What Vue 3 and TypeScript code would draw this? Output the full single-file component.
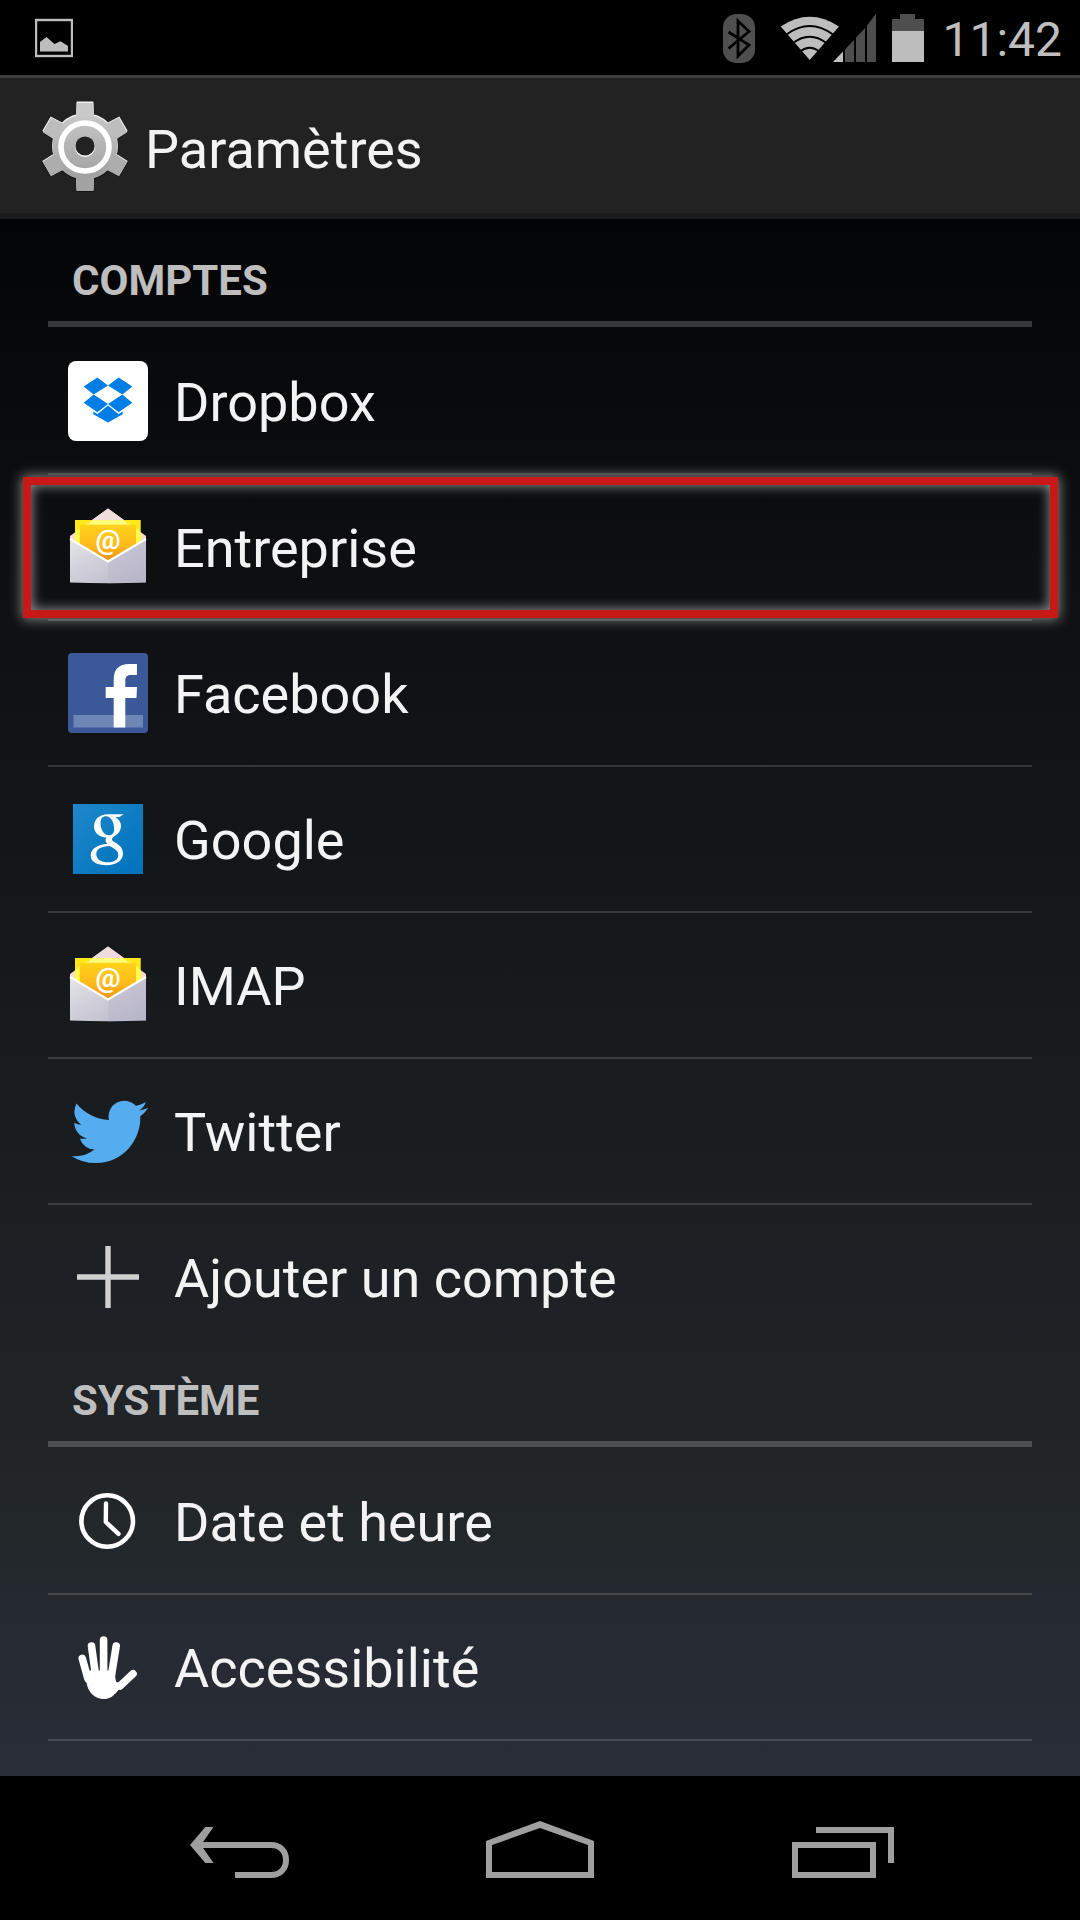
<script setup lang="ts">
type IconName = 'dropbox' | 'mail' | 'facebook' | 'google' | 'twitter' | 'plus' | 'clock' | 'hand'

interface Item {
  label: string
  icon: IconName
  highlighted?: boolean
}

interface Section {
  title: string
  items: Item[]
}

const sections: Section[] = [
  {
    title: 'COMPTES',
    items: [
      { label: 'Dropbox', icon: 'dropbox' },
      { label: 'Entreprise', icon: 'mail', highlighted: true },
      { label: 'Facebook', icon: 'facebook' },
      { label: 'Google', icon: 'google' },
      { label: 'IMAP', icon: 'mail' },
      { label: 'Twitter', icon: 'twitter' },
      { label: 'Ajouter un compte', icon: 'plus' },
    ],
  },
  {
    title: 'SYSTÈME',
    items: [
      { label: 'Date et heure', icon: 'clock' },
      { label: 'Accessibilité', icon: 'hand' },
    ],
  },
]

const teeth = [0, 60, 120, 180, 240, 300]
</script>

<template>
  <div class="screen">
    <!-- Gradients shared by the icons -->
    <svg class="defs" width="0" height="0" aria-hidden="true">
      <defs>
        <linearGradient id="metal" gradientUnits="userSpaceOnUse" x1="0" y1="-45" x2="0" y2="45">
          <stop offset="0" stop-color="#d0d0d0" />
          <stop offset="1" stop-color="#989898" />
        </linearGradient>
        <linearGradient id="paper" x1="0" y1="0" x2="0" y2="1">
          <stop offset="0" stop-color="#ffd21a" />
          <stop offset="0.6" stop-color="#ffb81a" />
          <stop offset="1" stop-color="#f08a10" />
        </linearGradient>
        <linearGradient id="flap" x1="0" y1="0" x2="0" y2="1">
          <stop offset="0" stop-color="#dcdce4" />
          <stop offset="0.3" stop-color="#fbdccf" />
          <stop offset="1" stop-color="#f3cfc4" />
        </linearGradient>
        <linearGradient id="front" x1="0" y1="0" x2="1" y2="1">
          <stop offset="0" stop-color="#e4e4e8" />
          <stop offset="1" stop-color="#b6b4c6" />
        </linearGradient>
        <linearGradient id="blue" x1="0" y1="0" x2="1" y2="1">
          <stop offset="0" stop-color="#1f88c9" />
          <stop offset="0.5" stop-color="#0f7cc2" />
          <stop offset="1" stop-color="#0072bc" />
        </linearGradient>
      </defs>
    </svg>

    <div class="status">
      <svg class="picture" width="38" height="40" viewBox="35 18 38 40" aria-hidden="true">
        <rect x="36" y="20" width="36" height="36" fill="none" stroke="#bdbdbd" stroke-width="2.4" />
        <path d="M40 42L46.5 37L54.5 44L60.5 41.3L68 46V51.5H40Z" fill="#bdbdbd" />
      </svg>
      <div class="indicators">
        <svg width="204" height="50" viewBox="721 11 204 50" aria-hidden="true">
          <rect x="723" y="12" width="32" height="49" rx="14" ry="13" fill="#4f4f4f" />
          <path d="M728.5 30L749 43L738 54V19L749 29.5L728.5 46.5" fill="none" stroke="#000" stroke-width="2.8" />
          <path d="M809.7 58L780.7 24.5Q809.7 5 839 24.5Z" fill="#bdbdbd" />
          <g fill="none" stroke="#000" stroke-width="2">
            <path d="M786.5 32.5Q809.7 15.5 833 32.5" />
            <path d="M793 41Q809.7 28.5 826.5 41" />
            <path d="M800 49.5Q809.7 42 819.5 49.5" />
          </g>
          <path d="M833 60L843 49.5V60Z" fill="#bdbdbd" />
          <path d="M845 47.5L854 38V60H845ZM856 35.5L865 26V60H856ZM867 23.5L876 12V60H867Z" fill="#4e4e4e" />
          <path d="M892 29V17H900V12H915V17H924V29Z" fill="#4e4e4e" />
          <rect x="892" y="29" width="32" height="31" fill="#bdbdbd" />
        </svg>
        <time class="time" datetime="11:42">11:42</time>
      </div>
    </div>

    <header class="bar">
      <svg width="96" height="96" viewBox="-48 -48 96 96" aria-hidden="true">
        <g fill="#111" transform="translate(0 1)">
          <circle r="33.6" />
          <path v-for="a in teeth" :key="a" :transform="`rotate(${a})`" d="M-9.5 -30L-8.8 -44.8H8.8L9.5 -30Z" />
        </g>
        <g fill="#f2f2f2">
          <circle r="33" />
          <path v-for="a in teeth" :key="a" :transform="`rotate(${a})`" d="M-9 -30L-8.4 -44.5H8.4L9 -30Z" />
        </g>
        <g transform="translate(0 1)" fill="url(#metal)">
          <circle r="32.6" />
        </g>
        <g fill="#b6b6b6">
          <path
            v-for="a in teeth"
            :key="a"
            :transform="`translate(0 1) rotate(${a})`"
            :fill="a === 0 ? '#c9c9c9' : a === 180 ? '#a3a3a3' : a === 60 || a === 300 ? '#bdbdbd' : '#adadad'"
            d="M-9 -30L-8.4 -44H8.4L9 -30Z"
          />
        </g>
        <circle r="24" cy="1" fill="none" stroke="#fff" stroke-width="5.6" />
        <circle r="10" cy="1" fill="#fff" />
        <circle r="9.6" fill="#222" />
      </svg>
      <h1 class="title">Paramètres</h1>
    </header>

    <main class="content">
      <section v-for="section in sections" :key="section.title" class="section">
        <h2 class="heading">{{ section.title }}</h2>
        <ul class="list">
          <li v-for="item in section.items" :key="item.label" class="item">
            <button type="button" class="row">
              <svg class="icon" width="80" height="80" viewBox="0 0 80 80" aria-hidden="true">
                <template v-if="item.icon === 'dropbox'">
                  <rect width="80" height="80" rx="8" fill="#fff" />
                  <path
                    fill="#007ee5"
                    d="M29.3 16.5L40 24.4L25.7 33.5L15.7 25.5ZM50.7 16.5L64.3 25.5L54.3 33.5L40 24.4ZM25.7 33.5L40 42.9L29.3 51.2L15.7 41.8ZM54.3 33.5L64.3 41.8L50.7 51.2L40 42.9ZM40 44.5L50.5 53.1L54.7 50.5V53.3L40 61.5L25.3 53.3V50.5L29.5 53.1Z"
                  />
                </template>
                <template v-else-if="item.icon === 'mail'">
                  <path d="M40 1.5L78 29V60H2V29Z" fill="url(#flap)" />
                  <path d="M7 13H72.7V53H7Z" fill="#ffe81a" />
                  <path d="M40 1.5L56 13H24Z" fill="#f0dcdc" />
                  <path d="M25 13H55L62 18H18Z" fill="#ffff7a" />
                  <path d="M7 25L12 21V45H7ZM72.7 25L68 21V45H72.7Z" fill="#ffff4a" />
                  <path d="M11.7 17.7H68V38L40 55L11.7 38Z" fill="url(#paper)" />
                  <text class="at" x="40" y="42" text-anchor="middle">@</text>
                  <path d="M2 32L40 55L78 32V75.5Q40 77 2 75.5Z" fill="url(#front)" />
                  <path d="M40 55L78 32V75.5L40 76.5Z" fill="#b4b2c8" opacity="0.35" />
                  <path d="M2 32L40 54.5L78 32" fill="none" stroke="#fff" stroke-width="2.2" />
                </template>
                <template v-else-if="item.icon === 'facebook'">
                  <rect width="80" height="80" rx="4" fill="#3b5998" />
                  <rect x="5.5" y="62" width="69.5" height="12.5" fill="#6e86b5" />
                  <path
                    fill="#fff"
                    d="M45.7 74.5V45H37.7V34H45.7V27C45.7 16 51 11 61 11H69V22H63.5C59 22 57.3 23.5 57.3 28V34H69L68.5 45H57.3V74.5Z"
                  />
                </template>
                <template v-else-if="item.icon === 'google'">
                  <rect x="5" y="5" width="70" height="70" fill="url(#blue)" />
                  <path
                    fill="#fff"
                    fill-rule="evenodd"
                    d="M40 15.3H55.5L51.5 18H47.5C51 20.5 53 23 53 27C53 31.5 50.5 34.5 47 36.8C44.5 38.3 44 39.3 44 40.4C44 41.6 45.5 42.5 48 44C52.5 46.8 55 50 55 54.6C55 61.5 48.5 66.2 38.5 66.2C29 66.2 22.7 62.5 22.7 56.7C22.7 49.5 29.5 45.8 39.5 44.8C38 43.5 37.5 42.5 37.5 41C37.5 40 38 39.2 38.5 38.4C31 38.4 26 33.5 26 27.5C26 20 32 15.3 40 15.3ZM38 17.3C34.5 17.3 32.5 20 32.5 24C32.5 30 35.7 36.3 41 36.3C44.7 36.3 46.2 33.5 46.2 30C46.2 24 43.3 17.3 38 17.3ZM41.5 47C33 47.4 28.3 50 28.3 55C28.3 60.3 33 63.3 40 63.3C46.5 63.3 50.3 60.5 50.3 56C50.3 51.8 47 50 41.5 47Z"
                  />
                </template>
                <path
                  v-else-if="item.icon === 'twitter'"
                  transform="translate(3.3 2.5) scale(3.2)"
                  fill="#55acee"
                  d="M23.953 4.57a10 10 0 01-2.825.775 4.958 4.958 0 002.163-2.723c-.951.555-2.005.959-3.127 1.184a4.92 4.92 0 00-8.384 4.482C7.69 8.095 4.067 6.13 1.64 3.162a4.822 4.822 0 00-.666 2.475c0 1.71.87 3.213 2.188 4.096a4.904 4.904 0 01-2.228-.616v.06a4.923 4.923 0 003.946 4.827 4.996 4.996 0 01-2.212.085 4.936 4.936 0 004.604 3.417 9.867 9.867 0 01-6.102 2.105c-.39 0-.779-.023-1.17-.067a13.995 13.995 0 007.557 2.209c9.053 0 13.998-7.496 13.998-13.985 0-.21 0-.42-.015-.63A9.935 9.935 0 0024 4.59z"
                />
                <path v-else-if="item.icon === 'plus'" d="M9 40H71M40 9V71" stroke="#d0d0d0" stroke-width="5.4" />
                <g v-else-if="item.icon === 'clock'" fill="none" stroke="#fff">
                  <circle cx="39.2" cy="40" r="25.8" stroke-width="4.6" />
                  <path d="M38 22.5L37.8 41L50.5 52.8" stroke-width="4.4" stroke-linecap="round" stroke-linejoin="round" />
                </g>
                <g v-else fill="#fff" stroke="#fff" stroke-linecap="round" stroke-linejoin="round">
                  <path
                    d="M14.3 31.5L20 52M23.5 19L27.5 48M35.6 13V48M48.2 19L43.5 48M65 46.8L52 59"
                    fill="none"
                    stroke-width="7.6"
                  />
                  <path d="M18 44H46.5Q46.5 56 49 56L58 53.5L50 63C45 69.5 41 71.5 36 71.5C27 71.5 21.5 66 19.5 58Z" stroke-width="1" />
                </g>
              </svg>
              <span class="label">{{ item.label }}</span>
            </button>
            <span v-if="item.highlighted" class="highlight"></span>
          </li>
        </ul>
      </section>
    </main>

    <nav class="nav">
      <button type="button" class="key" aria-label="Retour">
        <svg width="144" height="144" viewBox="0 0 144 144" aria-hidden="true">
          <path d="M22 69L37.3 51H45.5L33 69L45.5 87H37.3Z" fill="#9f9f9f" />
          <path d="M27 69H103C112 69 118 75 118 84S112 99 103 99H67" fill="none" stroke="#9f9f9f" stroke-width="6" />
        </svg>
      </button>
      <button type="button" class="key" aria-label="Accueil">
        <svg width="144" height="144" viewBox="0 0 144 144" aria-hidden="true">
          <path
            d="M72 45L126 65V102H18V65ZM72 52L24 69V96H120V69Z"
            fill="#9f9f9f"
            fill-rule="evenodd"
          />
        </svg>
      </button>
      <button type="button" class="key" aria-label="Applications récentes">
        <svg width="144" height="144" viewBox="0 0 144 144" aria-hidden="true">
          <path d="M27 69H105V99H27ZM48 54H123V87" fill="none" stroke="#9f9f9f" stroke-width="6" />
        </svg>
      </button>
    </nav>
  </div>
</template>

<style>
body {
  margin: 0;
  background: #000;
}
</style>

<style scoped>
.screen {
  display: flex;
  flex-direction: column;
  min-height: 100vh;
  background: #000;
  color: #f3f3f3;
  font-family: Roboto, "Noto Sans", sans-serif;
}

.defs {
  position: absolute;
}

.status {
  display: flex;
  align-items: center;
  justify-content: space-between;
  box-sizing: border-box;
  height: 75px;
  padding: 0 18px 0 35px;
}

.indicators {
  display: flex;
  align-items: center;
  gap: 17px;
}

.time {
  padding-top: 4px;
  color: #bebebe;
  font-size: 48px;
  line-height: 56px;
}

.bar {
  display: flex;
  align-items: center;
  gap: 12px;
  box-sizing: border-box;
  height: 144px;
  padding-left: 37px;
  border-top: 3px solid #3c3c3c;
  border-bottom: 6px solid #1b1b1b;
  background: #222;
}

.title,
.label {
  margin: 0;
  font-size: 54px;
  font-weight: 400;
  line-height: 64px;
}

.title {
  padding-top: 8px;
}

.label {
  padding-top: 4px;
}

.content {
  flex: 1;
  padding: 10px 48px 34px;
  background: linear-gradient(
    #030405 0%,
    #0a0b0d 13%,
    #111316 33%,
    #171b1d 52%,
    #1d2024 68%,
    #22272a 84%,
    #252a31 89%,
    #292d37 100%
  );
}

.heading {
  box-sizing: border-box;
  height: 98px;
  margin: 0;
  padding: 27px 24px 0;
  border-bottom: 6px solid rgba(255, 255, 255, 0.2);
  color: #bebebe;
  font-size: 42px;
  font-weight: 700;
  line-height: 50px;
}

.list {
  margin: 0;
  padding: 0;
  list-style: none;
}

.item {
  position: relative;
  border-top: 2px solid rgba(255, 255, 255, 0.15);
}

.item:first-child {
  border-top-color: transparent;
}

.section:last-child .item:last-child {
  border-bottom: 2px solid rgba(255, 255, 255, 0.15);
}

.row {
  display: flex;
  align-items: center;
  gap: 26px;
  width: 100%;
  height: 144px;
  padding: 0 20px;
  border: 0;
  background: none;
  color: inherit;
  font: inherit;
  text-align: left;
}

.icon {
  flex: none;
}

.at {
  fill: #fff;
  font-size: 28px;
  font-weight: 700;
}

.highlight {
  position: absolute;
  inset: 2px -26px 1px -25px;
  border: 8px solid #c91818;
  box-shadow: 0 0 12px 1px #8c8e8c, inset 0 0 12px 1px #8c8e8c;
  pointer-events: none;
}

.nav {
  display: flex;
  justify-content: center;
  height: 144px;
  padding: 0 90px;
}

.key {
  display: flex;
  flex: 1;
  align-items: center;
  justify-content: center;
  padding: 0;
  border: 0;
  background: none;
}
</style>
